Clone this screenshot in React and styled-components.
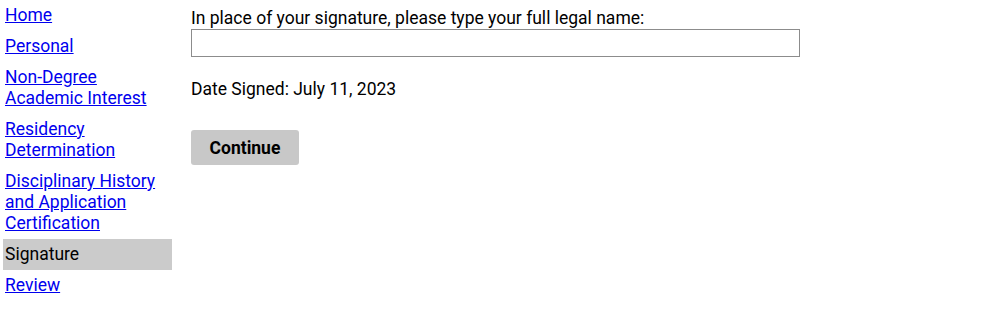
import React, { useState } from 'react';
import styled, { createGlobalStyle } from 'styled-components';

const GlobalStyle = createGlobalStyle`
  body {
    margin: 0;
    background: #fff;
    font-family: Roboto, "Liberation Sans", sans-serif;
    font-size: 17.5px;
    line-height: 21px;
    color: #000;
  }
`;

const Page = styled.div`
  display: flex;
  align-items: flex-start;
  gap: 19px;
  padding: 0 3px;
`;

const Nav = styled.nav`
  width: 169px;
  flex-shrink: 0;
  display: flex;
  flex-direction: column;
`;

const NavItem = styled.div`
  padding: 5px 2px;
  background: ${p => (p.$active ? '#cbcbcb' : 'transparent')};
`;

const NavLink = styled.a`
  color: #0000ee;
  text-decoration: underline;
`;

const Main = styled.main`
  flex: 1;
  padding-top: 8px;
  display: flex;
  flex-direction: column;
  align-items: flex-start;
`;

const Label = styled.label`
  display: block;
`;

const NameInput = styled.input`
  box-sizing: border-box;
  width: 609px;
  height: 28px;
  margin: 0;
  border: 1px solid #8c8c8c;
  font: inherit;
  padding: 0 4px;
  outline: none;
`;

const DateLine = styled.p`
  margin: 22px 0 0;
`;

const ContinueButton = styled.button`
  margin-top: 30px;
  width: 108px;
  height: 35px;
  border: none;
  border-radius: 3px;
  background: #c8c8c8;
  font-family: Roboto, "Liberation Sans", sans-serif;
  font-size: 17.5px;
  font-weight: 700;
  color: #000;
  cursor: pointer;
`;

const steps = [
  'Home',
  'Personal',
  'Non-Degree Academic Interest',
  'Residency Determination',
  'Disciplinary History and Application Certification',
  'Signature',
  'Review',
];

const App = () => {
  const [name, setName] = useState('');
  const current = 'Signature';

  return (
    <Page>
      <GlobalStyle />
      <Nav>
        {steps.map(step => (
          <NavItem key={step} $active={step === current}>
            {step === current ? step : <NavLink href="#">{step}</NavLink>}
          </NavItem>
        ))}
      </Nav>
      <Main>
        <Label htmlFor="legal-name">In place of your signature, please type your full legal name:</Label>
        <NameInput id="legal-name" value={name} onChange={e => setName(e.target.value)} />
        <DateLine>Date Signed: July 11, 2023</DateLine>
        <ContinueButton>Continue</ContinueButton>
      </Main>
    </Page>
  );
};

export default App;
